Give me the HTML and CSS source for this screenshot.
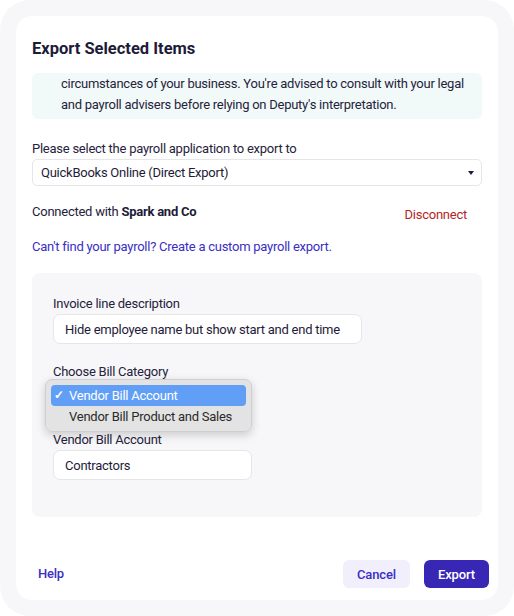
FILE: index.html
```html
<!DOCTYPE html>
<html>
<head>
<meta charset="utf-8">
<link rel="stylesheet" href="styles.css">
</head>
<body>
<div class="frame">
  <div class="card">
    <h1 class="title">Export Selected Items</h1>
    <div class="notice">
      <p>circumstances of your business. You're advised to consult with your legal and payroll advisers before relying on Deputy's interpretation.</p>
    </div>
    <div class="label top-label">Please select the payroll application to export to</div>
    <div class="select">
      <span>QuickBooks Online (Direct Export)</span>
      <span class="caret"></span>
    </div>
    <div class="connected">
      <span>Connected with <b>Spark and Co</b></span>
      <span class="disconnect">Disconnect</span>
    </div>
    <a class="link custom-link">Can't find your payroll? Create a custom payroll export.</a>
    <div class="panel">
      <div class="label">Invoice line description</div>
      <div class="input wide">Hide employee name but show start and end time</div>
      <div class="label gap-label">Choose Bill Category</div>
      <div class="field-wrap">
        <div class="input narrow"></div>
        <div class="menu">
          <div class="opt active"><span class="check">✓</span><span>Vendor Bill Account</span></div>
          <div class="opt"><span class="check"></span><span>Vendor Bill Product and Sales</span></div>
        </div>
      </div>
      <div class="label account-label">Vendor Bill Account</div>
      <div class="input narrow">Contractors</div>
    </div>
    <div class="footer">
      <a class="link help">Help</a>
      <div class="actions">
        <button class="btn cancel">Cancel</button>
        <button class="btn export">Export</button>
      </div>
    </div>
  </div>
</div>
</body>
</html>
```

FILE: styles.css
```css
* { box-sizing: border-box; }
html, body { margin: 0; padding: 0; background: #ffffff; }
body {
  font-family: Roboto, "Liberation Sans", sans-serif;
  font-size: 13px;
  letter-spacing: -0.25px;
  color: #26223c;
}
.frame {
  width: 514px;
  height: 616px;
  background: #f7f7f9;
  border-radius: 30px;
  padding: 16px;
}
.card {
  height: 584px;
  background: #ffffff;
  border-radius: 16px;
  padding: 23px 16px 12px 16px;
  display: flex;
  flex-direction: column;
}
.title {
  margin: 0;
  font-size: 16.5px;
  line-height: 20px;
  font-weight: 700;
  letter-spacing: 0;
  color: #1e1b39;
}
.notice {
  margin-top: 14px;
  background: #f1faf8;
  border-radius: 6px;
  padding: 0 10px 4px 29px;
}
.notice p {
  margin: 0;
  line-height: 21px;
}
.label {
  line-height: 18px;
  white-space: nowrap;
}
.top-label { margin-top: 21px; }
.select {
  margin-top: 1px;
  height: 27px;
  border: 1px solid #e6e6ea;
  border-radius: 5px;
  padding: 0 7px 0 8px;
  display: flex;
  align-items: center;
  justify-content: space-between;
  color: #1e1b39;
}
.caret {
  width: 0;
  height: 0;
  border-left: 3px solid transparent;
  border-right: 3px solid transparent;
  border-top: 4px solid #1e1b39;
}
.connected {
  margin-top: 17px;
  display: flex;
  justify-content: space-between;
  align-items: flex-start;
  line-height: 18px;
}
.connected b { font-weight: 700; color: #1e1b39; }
.disconnect {
  color: #b3271f;
  padding: 3px 15px 0 0;
}
.link {
  color: #3a2ec4;
  cursor: pointer;
  text-decoration: none;
}
.custom-link {
  display: block;
  margin-top: 14px;
  line-height: 18px;
}
.panel {
  margin-top: 17px;
  background: #f7f7f9;
  border-radius: 8px;
  padding: 22px 21px 37px 21px;
}
.input {
  margin-top: 1px;
  height: 30px;
  background: #ffffff;
  border: 1px solid #e6e6ea;
  border-radius: 7px;
  padding: 0 11px;
  display: flex;
  align-items: center;
  color: #1e1b39;
  white-space: nowrap;
}
.input.wide { width: 309px; }
.input.narrow { width: 199px; }
.gap-label { margin-top: 19px; }
.account-label { margin-top: 19px; }
.field-wrap { position: relative; }
.menu {
  position: absolute;
  left: -8px;
  top: -3px;
  width: 207px;
  background: rgba(226, 226, 226, 0.97);
  border: 1px solid #cfcfd1;
  border-radius: 7px;
  box-shadow: 0 3px 10px rgba(0, 0, 0, 0.18);
  padding: 5px 5px 4px 5px;
}
.opt {
  height: 21px;
  line-height: 21px;
  border-radius: 4px;
  color: #2a2a2a;
  display: flex;
  white-space: nowrap;
}
.opt.active {
  background: #619ef6;
  color: #ffffff;
}
.check {
  width: 18px;
  flex: none;
  padding-left: 3px;
  font-size: 12px;
  font-weight: 700;
}
.footer {
  margin-top: auto;
  display: flex;
  justify-content: space-between;
  align-items: center;
  margin-right: -7px;
  padding-left: 6px;
}
.help { line-height: 18px; font-weight: 500; }
.actions {
  display: flex;
  gap: 14px;
}
.btn {
  height: 28px;
  border: none;
  border-radius: 6px;
  font-family: Roboto, "Liberation Sans", sans-serif;
  font-size: 13px;
  font-weight: 500;
  letter-spacing: -0.1px;
  padding: 0;
}
.cancel {
  width: 67px;
  background: #f1effb;
  color: #3a2ec4;
}
.export {
  width: 65px;
  background: #3827b4;
  color: #ffffff;
}
```
